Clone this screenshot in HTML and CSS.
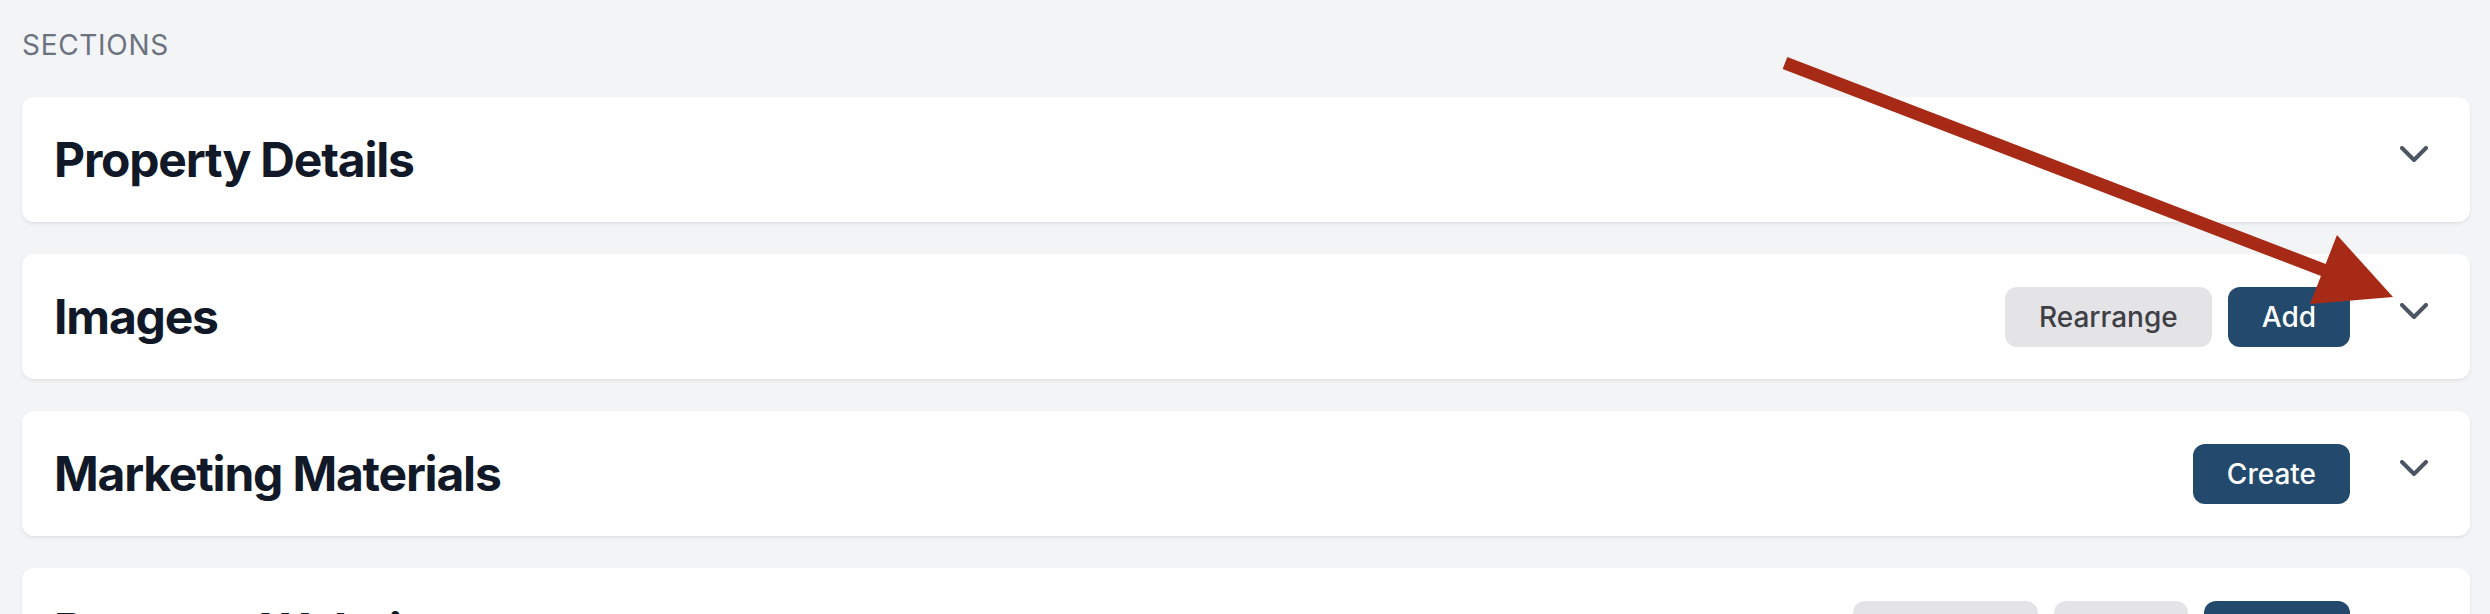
FILE: index.html
```html
<!DOCTYPE html>
<html lang="en">
<head>
<meta charset="utf-8">
<title>Sections</title>
<link rel="stylesheet" href="styles.css">
</head>
<body>
<main class="page">
  <h2 class="label">SECTIONS</h2>
  <div class="sections">
    <section class="card">
      <div class="card-head">
        <h3 class="title">Property Details</h3>
        <button class="toggle" aria-label="Expand"><svg class="chev" viewBox="0 0 28 16" width="28" height="16"><polyline points="2,2 14,14 26,2"/></svg></button>
      </div>
    </section>
    <section class="card">
      <div class="card-head">
        <h3 class="title">Images</h3>
        <div class="actions">
          <button class="btn btn-gray">Rearrange</button>
          <button class="btn btn-blue">Add</button>
        </div>
        <button class="toggle" aria-label="Expand"><svg class="chev" viewBox="0 0 28 16" width="28" height="16"><polyline points="2,2 14,14 26,2"/></svg></button>
      </div>
    </section>
    <section class="card">
      <div class="card-head">
        <h3 class="title">Marketing Materials</h3>
        <div class="actions">
          <button class="btn btn-blue">Create</button>
        </div>
        <button class="toggle" aria-label="Expand"><svg class="chev" viewBox="0 0 28 16" width="28" height="16"><polyline points="2,2 14,14 26,2"/></svg></button>
      </div>
    </section>
    <section class="card">
      <div class="card-head">
        <h3 class="title">Property Website</h3>
        <div class="actions">
          <button class="btn btn-gray">Domains</button>
          <button class="btn btn-gray">View</button>
          <button class="btn btn-blue">Share</button>
        </div>
        <button class="toggle" aria-label="Expand"><svg class="chev" viewBox="0 0 28 16" width="28" height="16"><polyline points="2,2 14,14 26,2"/></svg></button>
      </div>
    </section>
  </div>
</main>
<svg class="annotation" width="2490" height="614" viewBox="0 0 2490 614" aria-hidden="true">
  <line x1="1785" y1="63" x2="2326" y2="271" class="arrow-line"/>
  <polygon points="2337,235 2310,304 2393,297" class="arrow-head"/>
</svg>
</body>
</html>
```

FILE: styles.css
```css
html, body {
  margin: 0;
  padding: 0;
  overflow: hidden;
}

body {
  background: #f3f4f6;
  font-family: Inter, "Noto Sans", "Liberation Sans", sans-serif;
  color: #111827;
}

.page {
  padding: 25px 20px 0 22px;
}

.label {
  margin: 0;
  font-size: 28px;
  line-height: 40px;
  font-weight: 400;
  letter-spacing: 0.025em;
  color: #6b7280;
}

.sections {
  margin-top: 32px;
  display: flex;
  flex-direction: column;
  gap: 32px;
}

.card {
  background: #ffffff;
  border-radius: 12px;
  box-shadow: 0 2px 4px rgba(17, 24, 39, 0.06), 0 1px 2px rgba(17, 24, 39, 0.04);
  padding: 32px;
}

.card-head {
  display: flex;
  align-items: center;
  height: 61px;
}

.title {
  flex: 1;
  margin: 0;
  font-size: 48px;
  line-height: 60px;
  font-weight: 700;
  letter-spacing: -0.025em;
  color: #111827;
}

.actions {
  display: flex;
  gap: 16px;
}

.btn {
  font-family: inherit;
  font-size: 28px;
  line-height: 40px;
  font-weight: 500;
  padding: 10px 34px;
  border: 0;
  border-radius: 12px;
  cursor: pointer;
}

.btn-gray {
  background: #e4e4e7;
  color: #3f3f46;
}

.btn-blue {
  background: #234a6c;
  color: #ffffff;
}

.toggle {
  width: 48px;
  height: 48px;
  margin-left: 40px;
  padding: 10px 0 0 0;
  border: 0;
  background: transparent;
  display: flex;
  justify-content: center;
  align-items: flex-start;
  cursor: pointer;
}

.chev {
  display: block;
}

.chev polyline {
  fill: none;
  stroke: #4b5563;
  stroke-width: 4;
  stroke-linecap: round;
  stroke-linejoin: round;
}

.annotation {
  position: absolute;
  left: 0;
  top: 0;
  pointer-events: none;
}

.arrow-line {
  stroke: #a72a17;
  stroke-width: 13;
  stroke-linecap: butt;
}

.arrow-head {
  fill: #a72a17;
}
```
